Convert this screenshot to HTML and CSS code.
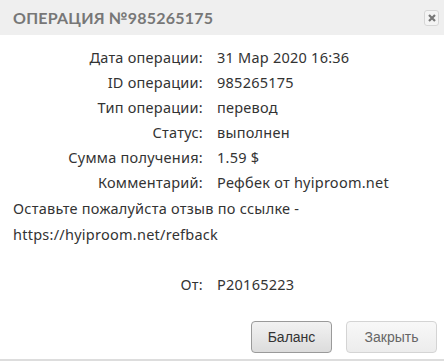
FILE: index.html
```html
<!DOCTYPE html>
<html lang="ru">

<head>
    <meta charset="UTF-8">
    <title>Операция №985265175</title>
    <link rel="stylesheet" href="styles.css">
</head>

<body>
    <div class="dialog">
        <div class="dialog-header">
            <span class="dialog-title">Операция №985265175</span>
            <button type="button" class="close-btn" title="Закрыть">
                <svg width="8" height="8" viewBox="0 0 8 8">
                    <path d="M1 1L7 7M7 1L1 7" stroke="#777" stroke-width="2.2" />
                </svg>
            </button>
        </div>
        <div class="dialog-body">
            <div class="info">
                <div class="label">Дата операции:</div>
                <div class="value">31 Мар 2020 16:36</div>
                <div class="label">ID операции:</div>
                <div class="value">985265175</div>
                <div class="label">Тип операции:</div>
                <div class="value">перевод</div>
                <div class="label">Статус:</div>
                <div class="value">выполнен</div>
                <div class="label">Сумма получения:</div>
                <div class="value">1.59 $</div>
                <div class="label">Комментарий:</div>
                <div class="value">Рефбек от hyiproom.net</div>
            </div>
            <p class="note">Оставьте пожалуйста отзыв по ссылке -<br>https://hyiproom.net/refback</p>
            <div class="info from">
                <div class="label">От:</div>
                <div class="value">P20165223</div>
            </div>
        </div>
        <div class="dialog-footer">
            <button type="button" class="btn">Баланс</button>
            <button type="button" class="btn btn-light">Закрыть</button>
        </div>
    </div>
</body>

</html>
```

FILE: styles.css
```css
body {
    margin: 0;
    background: #fff;
    font-family: "Noto Sans", sans-serif;
    font-size: 14.5px;
    letter-spacing: 0.25px;
    color: #333;
}

.dialog {
    width: 444px;
    height: 359px;
    border-bottom: 2px solid #ddd;
    display: flex;
    flex-direction: column;
}

.dialog-header {
    height: 35px;
    background-color: #efefef;
    display: flex;
    align-items: center;
    justify-content: space-between;
    padding: 0 5px 0 13px;
}

.dialog-title {
    font-family: "Lato", sans-serif;
    font-weight: bold;
    font-size: 16px;
    letter-spacing: 0.2px;
    text-transform: uppercase;
    color: #777;
}

.close-btn {
    width: 15px;
    height: 16px;
    padding: 0;
    border: 1px solid #d6d6d6;
    border-radius: 3px;
    background: #f4f4f4;
    display: flex;
    align-items: center;
    justify-content: center;
    margin-top: 1px;
}

.dialog-body {
    padding: 10px 13px 0;
    flex: 1;
}

.info {
    display: grid;
    grid-template-columns: 190px auto;
    column-gap: 14px;
    line-height: 25px;
}

.label {
    text-align: right;
}

.note {
    margin: 0;
    line-height: 26px;
}

.from {
    margin-top: 25px;
}

.dialog-footer {
    display: flex;
    justify-content: flex-end;
    gap: 14px;
    padding: 0 7px 6px;
}

.btn {
    font-family: "Liberation Sans", Arial, sans-serif;
    font-size: 14px;
    color: #333;
    height: 32px;
    width: 81px;
    border: 1px solid #9a9a9a;
    border-radius: 4px;
    background: linear-gradient(#f2f2f2, #dcdcdc);
}

.btn-light {
    width: 91px;
    color: #666;
    border-color: #d4d4d4;
    background: linear-gradient(#f8f8f8, #ececec);
}
```
